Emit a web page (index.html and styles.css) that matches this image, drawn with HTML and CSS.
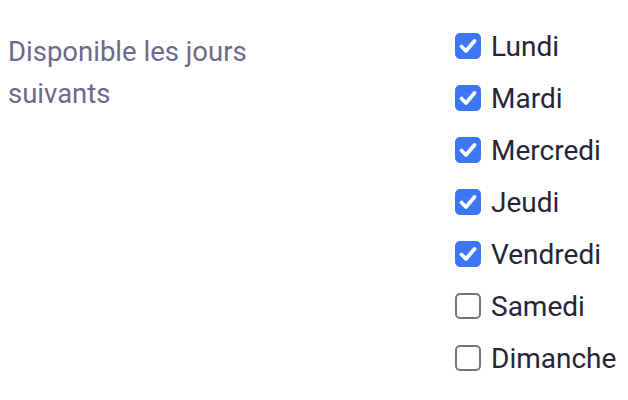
FILE: index.html
```html
<!DOCTYPE html>
<html lang="fr">
<head>
<meta charset="utf-8">
<link rel="stylesheet" href="styles.css">
</head>
<body>
<div class="field">
  <div class="label">Disponible les jours suivants</div>
  <ul class="days">
    <li class="day"><span class="box checked"><svg viewBox="0 0 26 26"><path d="M6.5 13.5l4.5 4.5 8.5-10" /></svg></span><span class="name">Lundi</span></li>
    <li class="day"><span class="box checked"><svg viewBox="0 0 26 26"><path d="M6.5 13.5l4.5 4.5 8.5-10" /></svg></span><span class="name">Mardi</span></li>
    <li class="day"><span class="box checked"><svg viewBox="0 0 26 26"><path d="M6.5 13.5l4.5 4.5 8.5-10" /></svg></span><span class="name">Mercredi</span></li>
    <li class="day"><span class="box checked"><svg viewBox="0 0 26 26"><path d="M6.5 13.5l4.5 4.5 8.5-10" /></svg></span><span class="name">Jeudi</span></li>
    <li class="day"><span class="box checked"><svg viewBox="0 0 26 26"><path d="M6.5 13.5l4.5 4.5 8.5-10" /></svg></span><span class="name">Vendredi</span></li>
    <li class="day"><span class="box"></span><span class="name">Samedi</span></li>
    <li class="day"><span class="box"></span><span class="name">Dimanche</span></li>
  </ul>
</div>
</body>
</html>
```
FILE: styles.css
```css
html, body {
  margin: 0;
  padding: 0;
  background: #ffffff;
}
body {
  font-family: Roboto, "Liberation Sans", sans-serif;
}
.field {
  display: flex;
  padding: 20px 0 0 8px;
}
.label {
  width: 250px;
  margin-top: 11px;
  font-size: 27.5px;
  line-height: 42px;
  color: #6d6a8c;
}
.days {
  list-style: none;
  margin: 0 0 0 197px;
  padding: 0;
  display: flex;
  flex-direction: column;
}
.day {
  display: flex;
  align-items: center;
  height: 52px;
}
.box {
  box-sizing: border-box;
  flex: none;
  width: 26px;
  height: 26px;
  border: 2px solid #777777;
  border-radius: 5px;
  margin-right: 10px;
  display: flex;
  align-items: center;
  justify-content: center;
  background: #fff;
}
.box.checked {
  border: none;
  background: #3b76f5;
}
.box svg {
  width: 26px;
  height: 26px;
}
.box svg path {
  fill: none;
  stroke: #fff;
  stroke-width: 3.8;
  stroke-linecap: round;
  stroke-linejoin: round;
}
.name {
  font-size: 28px;
  color: #262638;
}
```
